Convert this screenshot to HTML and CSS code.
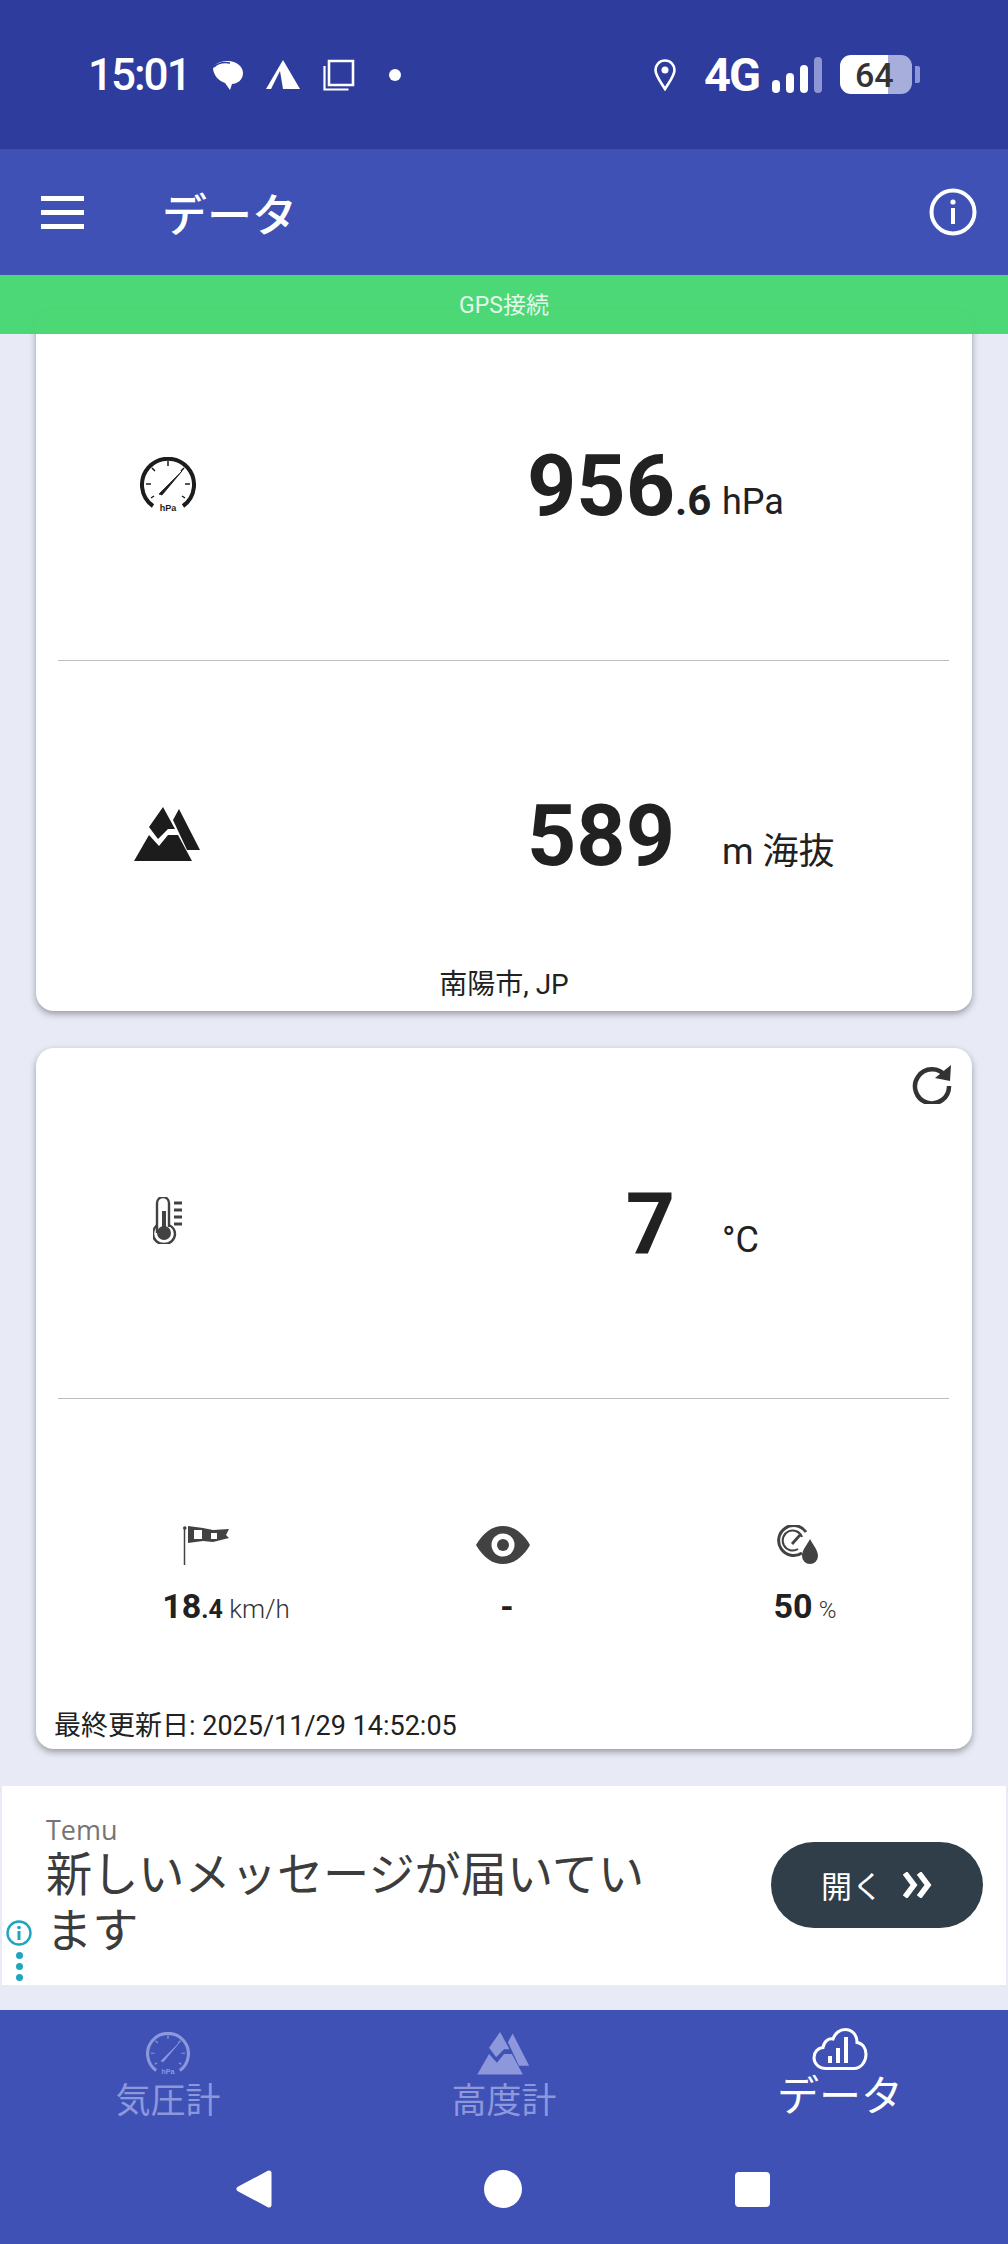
FILE: index.html
```html
<!DOCTYPE html>
<html lang="ja">
<head>
    <meta charset="UTF-8">
    <meta name="viewport" content="width=device-width, initial-scale=1.0">
    <title>データ</title>
    <link rel="stylesheet" href="styles.css">
</head>
<body>
    <svg class="defs" width="0" height="0">
        <symbol id="dial" viewBox="0 0 56 56">
            <path d="M13 49 A26 26 0 1 1 43 49" fill="none" stroke="currentColor" stroke-width="4"/>
            <path d="M28 4v5M6 27h5M50 27h-5M12 11l3 3M44 11l-3 3M11 41l3-2M45 41l-3-2" stroke="currentColor" stroke-width="1.5"/>
            <path d="M19 37 L42 14 L22 38Z" fill="currentColor" stroke="currentColor" stroke-width=".8"/>
        </symbol>
        <symbol id="mountain" viewBox="0 0 68 56">
            <path d="M29 0 L15 20 L24 32 L34 22 L41 22Z M45 2 L66 43 L53 43 L39 13Z M0 54 L15 28 L25 39 L34 28 L44 28 L58 54Z" fill="currentColor"/>
        </symbol>
    </svg>

    <div class="status-bar">
        <div class="status-left">
            <span class="clock">15:01</span>
            <svg class="st-bubble" viewBox="0 0 31 30"><path d="M1 9C3 3 9 1 16 1c8 0 15 5 15 12s-6 11-11 11l-2 6-5-7C7 21 2 16 1 9z" fill="#fff"/><path d="M2 7C6 3 12 2 18 3" stroke="#2d3c9d" stroke-width="1.5" fill="none"/></svg>
            <svg class="st-tri" viewBox="0 0 34 29"><path d="M17 0 L34 29 H17 L14 11 L5 29 H0Z" fill="#fff"/></svg>
            <svg class="st-copy" viewBox="0 0 32 32"><path d="M6 2h24v24H6z" fill="none" stroke="#fff" stroke-width="2.6"/><path d="M1.500 7v23.500h24" fill="none" stroke="#fff" stroke-width="2.2"/></svg>
            <span class="st-dot"></span>
        </div>
        <div class="status-right">
            <svg class="st-pin" viewBox="0 0 22 32"><path d="M11 1.500C5.500 1.500 1.500 6 1.500 11c0 6 6 13 9.500 19 3.500-6 9.500-13 9.500-19 0-5-4-9.500-9.500-9.500z" fill="none" stroke="#fff" stroke-width="2.6"/><circle cx="11" cy="11" r="3.500" fill="#fff"/></svg>
            <span class="net">4G</span>
            <div class="signal">
                <span class="bar b1"></span>
                <span class="bar b2"></span>
                <span class="bar b3"></span>
                <span class="bar b4"></span>
            </div>
            <div class="battery">
                <div class="battery-body"><span>64</span></div>
                <span class="battery-nub"></span>
            </div>
        </div>
    </div>

    <header class="toolbar">
        <div class="hamburger"><span></span><span></span><span></span></div>
        <h1>データ</h1>
        <svg class="info" viewBox="0 0 48 48">
            <circle cx="24" cy="24" r="21.500" fill="none" stroke="#fff" stroke-width="4"/>
            <rect x="22" y="20" width="4" height="16" fill="#fff"/>
            <circle cx="24" cy="14" r="2.600" fill="#fff"/>
        </svg>
    </header>

    <div class="gps-banner">GPS接続</div>

    <main class="content">
        <section class="card card-first">
            <div class="row">
                <svg class="row-icon gauge-icon" viewBox="0 0 56 56">
                    <use href="#dial"/>
                    <text x="28" y="54" text-anchor="middle" class="gauge-text">hPa</text>
                </svg>
                <div class="value"><b>956</b><span class="dec">.6</span></div>
                <div class="unit">hPa</div>
            </div>
            <div class="row row-line">
                <svg class="row-icon mountain-icon"><use href="#mountain"/></svg>
                <div class="value"><b>589</b><span class="dec"></span></div>
                <div class="unit">m 海抜</div>
            </div>
            <div class="place">南陽市, JP</div>
        </section>

        <section class="card">
            <svg class="refresh" viewBox="0 0 40 40">
                <path d="M33.500 12A17 17 0 1 0 37 22" fill="none" stroke="#333" stroke-width="4.500"/>
                <path d="M39 1 L38 17 L23 14Z" fill="#333"/>
            </svg>
            <div class="row">
                <svg class="row-icon thermo-icon" viewBox="0 0 30 47">
                    <path d="M4 36V6a6 6 0 0 1 12 0v24" fill="none" stroke="#424242" stroke-width="2.400"/>
                    <path d="M16 28c4 2 6 5 6 9a11 10 0 0 1-22 0c0-4 2-7 4-9" fill="none" stroke="#424242" stroke-width="2.400"/>
                    <circle cx="11" cy="36" r="7" fill="#424242"/>
                    <rect x="9" y="14" width="4" height="18" fill="#424242"/>
                    <path d="M21 6h8M21 13h8M21 20h8M21 27h8" stroke="#424242" stroke-width="3"/>
                </svg>
                <div class="value"><b>7</b><span class="dec"></span></div>
                <div class="unit">°C</div>
            </div>
            <div class="row-three row-line">
                <div class="stat stat-wind">
                    <svg class="stat-icon wind-icon" viewBox="0 0 48 40">
                        <path d="M1.500 3v37" stroke="#424242" stroke-width="1.500"/>
                        <circle cx="1.800" cy="3" r="1.800" fill="#424242"/>
                        <path d="M5 1 L20 3 L30 5 L46 4 L43 10 L46 13 L30 17 L20 16 L5 18Z" fill="#424242"/>
                        <path d="M11 5h8v9h-8zM28 8h6v6h-6z" fill="#fff"/>
                    </svg>
                    <div class="stat-text"><b>18</b><b class="small">.4</b> <span>km/h</span></div>
                </div>
                <div class="stat stat-eye">
                    <svg class="stat-icon eye-icon" viewBox="0 0 54 38">
                        <path d="M0 19C7 7 16 0 27 0s20 7 27 19c-7 12-16 19-27 19S7 31 0 19z" fill="#424242"/>
                        <circle cx="27" cy="19" r="11.500" fill="#fff"/>
                        <circle cx="27" cy="19" r="6" fill="#424242"/>
                    </svg>
                    <div class="stat-text"><b>-</b></div>
                </div>
                <div class="stat stat-hum">
                    <svg class="stat-icon hum-icon" viewBox="0 0 41 40">
                        <path d="M25 28A15 15 0 1 1 29 7" fill="none" stroke="#424242" stroke-width="3"/>
                        <path d="M21 24A10 10 0 1 1 25 12" fill="none" stroke="#424242" stroke-width="2"/>
                        <path d="M15 19 L23 10" stroke="#424242" stroke-width="2.800"/>
                        <path d="M33 14c3 6 8 11 8 17a8 8 0 0 1-16 0c0-6 5-11 8-17z" fill="#424242"/>
                    </svg>
                    <div class="stat-text"><b>50</b> <span class="pct">%</span></div>
                </div>
            </div>
            <div class="updated">最終更新日: 2025/11/29 14:52:05</div>
        </section>

        <aside class="ad">
            <div class="ad-text">
                <div class="ad-brand">Temu</div>
                <div class="ad-title">新しいメッセージが届いています</div>
            </div>
            <div class="ad-button">
                <span>開く</span>
                <svg class="chevrons" viewBox="0 0 30 26"><path d="M2 1l9 12-9 12M16 1l9 12-9 12" fill="none" stroke="#fff" stroke-width="5.500"/></svg>
            </div>
            <div class="ad-choices">
                <svg class="ad-info" viewBox="0 0 26 26"><circle cx="13" cy="13" r="11.500" fill="none" stroke="#1ea5c0" stroke-width="2.400"/><rect x="11.500" y="11" width="3" height="9" fill="#1ea5c0"/><circle cx="13" cy="7.500" r="1.800" fill="#1ea5c0"/></svg>
                <span class="ad-dot"></span><span class="ad-dot"></span><span class="ad-dot"></span>
            </div>
        </aside>
    </main>

    <footer class="bottom">
        <nav class="tabs">
            <div class="tab">
                <svg class="tab-icon" viewBox="0 0 56 56">
                    <use href="#dial"/>
                    <text x="28" y="54" text-anchor="middle" class="gauge-text">hPa</text>
                </svg>
                <span>気圧計</span>
            </div>
            <div class="tab">
                <svg class="tab-icon"><use href="#mountain"/></svg>
                <span>高度計</span>
            </div>
            <div class="tab active">
                <svg class="tab-icon" viewBox="0 0 56 42">
                    <path d="M14 40.500C6 40.500 2 35 2 29.500 2 24 6 20 11 19.500 12 13 17 10 21 11 23 5 28 1.500 33 1.500c7 0 12 5 12 13 6 1 9 6 9 12 0 7-5 14-12 14z" fill="none" stroke="#fff" stroke-width="3"/>
                    <path d="M16 28h4v7h-4zM24 20h4v15h-4zM32 9h4v26h-4z" fill="#fff"/>
                </svg>
                <span>データ</span>
            </div>
        </nav>
        <div class="sys-nav">
            <svg class="sys-back" viewBox="0 0 36 38"><path d="M33 3 L3 19 L33 35Z" fill="#fff" stroke="#fff" stroke-width="5" stroke-linejoin="round"/></svg>
            <span class="sys-home"></span>
            <span class="sys-recent"></span>
        </div>
    </footer>
</body>
</html>
```

FILE: styles.css
```css
* {
    margin: 0;
    padding: 0;
    box-sizing: border-box;
}

body {
    font-family: Roboto, 'Noto Sans CJK JP', sans-serif;
    background: #e8eaf6;
    color: #212121;
    width: 1008px;
    height: 2244px;
    display: flex;
    flex-direction: column;
    overflow: hidden;
}

.defs {
    position: absolute;
}

.gauge-text {
    font-family: 'Liberation Sans', sans-serif;
    font-size: 9px;
    font-weight: 700;
    fill: currentColor;
}

/* status bar */
.status-bar {
    height: 149px;
    background: #2d3c9d;
    color: white;
    display: flex;
    justify-content: space-between;
    align-items: center;
    padding: 0 88px 0 88px;
    flex-shrink: 0;
}

.status-left,
.status-right {
    display: flex;
    align-items: center;
}

.clock {
    font-family: Roboto, sans-serif;
    font-size: 44px;
    font-weight: 500;
    letter-spacing: -2px;
    width: 124px;
}

.st-bubble {
    width: 31px;
    height: 30px;
    margin-right: 23px;
}

.st-tri {
    width: 34px;
    height: 29px;
    margin-right: 23px;
}

.st-copy {
    width: 32px;
    height: 32px;
    margin-right: 34px;
}

.st-dot {
    width: 12px;
    height: 12px;
    border-radius: 50%;
    background: white;
}

.st-pin {
    width: 22px;
    height: 32px;
    margin-right: 28px;
}

.net {
    font-family: Roboto, sans-serif;
    font-size: 47px;
    font-weight: 700;
    letter-spacing: -2px;
    width: 68px;
    line-height: 1;
}

.signal {
    display: flex;
    align-items: flex-end;
    gap: 6px;
    height: 36px;
    margin-right: 18px;
}

.bar {
    width: 8px;
    background: white;
    border-radius: 4px;
}

.b1 { height: 13px; }
.b2 { height: 20px; }
.b3 { height: 28px; }
.b4 { height: 36px; background: #8e97d6; }

.battery {
    display: flex;
    align-items: center;
    gap: 3px;
}

.battery-body {
    width: 72px;
    height: 39px;
    border-radius: 11px;
    background: linear-gradient(90deg, white 0, white 48px, #a8aedb 48px);
    color: #333;
    font-family: Roboto, sans-serif;
    font-size: 34px;
    font-weight: 500;
    line-height: 40px;
    padding-left: 15px;
}

.battery-nub {
    width: 5px;
    height: 17px;
    background: #8e97d6;
    border-radius: 0 2px 2px 0;
}

/* toolbar */
.toolbar {
    height: 126px;
    background: #3f51b5;
    color: white;
    display: flex;
    align-items: center;
    padding: 0 31px 0 41px;
    flex-shrink: 0;
}

.hamburger {
    width: 43px;
    display: flex;
    flex-direction: column;
    gap: 9px;
}

.hamburger span {
    height: 5px;
    background: white;
}

.toolbar h1 {
    font-size: 45px;
    font-weight: 500;
    margin-left: 78px;
    flex: 1;
}

.info {
    width: 48px;
    height: 48px;
}

.gps-banner {
    height: 59px;
    background: rgba(70, 214, 112, 0.96);
    color: #e4f8e9;
    font-size: 23px;
    text-align: center;
    line-height: 62px;
    position: relative;
    z-index: 2;
    flex-shrink: 0;
}

/* cards */
.content {
    flex: 1;
    display: flex;
    flex-direction: column;
    gap: 37px;
}

.card {
    position: relative;
    margin: 0 36px;
    height: 701px;
    background: white;
    border-radius: 18px;
    box-shadow: 0 3px 7px rgba(0, 0, 0, 0.35);
}

.card-first {
    margin-top: -24px;
}

.row {
    height: 350px;
    display: grid;
    grid-template-columns: 264px 422px 1fr;
    align-items: center;
}

.row-line {
    position: relative;
}

.row-line::before {
    content: "";
    position: absolute;
    top: 0;
    left: 22px;
    right: 23px;
    height: 1px;
    background: #bdbdbd;
}

.row-icon {
    justify-self: center;
}

.gauge-icon {
    width: 56px;
    height: 56px;
    color: #1c1c1c;
}

.mountain-icon {
    width: 68px;
    height: 56px;
    color: #1c1c1c;
}

.thermo-icon {
    width: 30px;
    height: 47px;
    margin-top: -5px;
}

.value {
    text-align: right;
    white-space: nowrap;
    line-height: 1;
    margin-top: 2px;
}

.value b {
    font-size: 86px;
    font-weight: 700;
}

.dec {
    display: inline-block;
    min-width: 47px;
    font-size: 42px;
    font-weight: 700;
    text-align: left;
}

.unit {
    font-size: 36px;
    line-height: 42px;
    margin-top: 34px;
    white-space: nowrap;
}

.place {
    position: absolute;
    left: 0;
    right: 0;
    bottom: 9px;
    text-align: center;
    font-size: 28px;
}

.refresh {
    position: absolute;
    top: 16px;
    right: 20px;
    width: 40px;
    height: 40px;
}

.row-three {
    height: 351px;
}

.stat {
    position: absolute;
    top: 127px;
    display: flex;
    flex-direction: column;
    align-items: center;
    width: 240px;
}

.stat-wind { left: 70px; }
.stat-eye { left: 351px; }
.stat-hum { left: 649px; }

.stat-icon {
    height: 40px;
}

.wind-icon { width: 48px; margin-right: 38px; }
.eye-icon { width: 54px; margin-right: 8px; }
.hum-icon { width: 41px; margin-right: 16px; }

.stat-text {
    margin-top: 21px;
    font-size: 26px;
    line-height: 40px;
    white-space: nowrap;
}

.stat-text b {
    font-size: 34px;
    font-weight: 700;
}

.stat-text .small {
    font-size: 25px;
}

.stat-text span {
    font-weight: 300;
    color: #333;
}

.stat-text .pct {
    font-size: 24px;
}

.updated {
    position: absolute;
    left: 18px;
    bottom: 6px;
    font-size: 27px;
}

/* ad */
.ad {
    position: relative;
    margin: 0 2px;
    height: 199px;
    background: white;
    display: flex;
    align-items: center;
    justify-content: space-between;
    padding: 2px 23px 0 44px;
}

.ad-brand {
    font-family: 'Open Sans', 'Noto Sans CJK JP', sans-serif;
    font-size: 27px;
    color: #757575;
    line-height: 34px;
    margin-top: -2px;
}

.ad-title {
    font-size: 46.2px;
    line-height: 56px;
    color: #3c3c3c;
    width: 610px;
}

.ad-button {
    width: 212px;
    height: 86px;
    margin-top: -4px;
    border-radius: 43px;
    background: #2f3e48;
    color: white;
    font-size: 31px;
    display: flex;
    align-items: center;
    justify-content: center;
    gap: 20px;
}

.chevrons {
    width: 30px;
    height: 26px;
}

.ad-choices {
    position: absolute;
    left: 4px;
    bottom: 4px;
    display: flex;
    flex-direction: column;
    align-items: center;
    gap: 4px;
}

.ad-info {
    width: 26px;
    height: 26px;
    margin-bottom: 2px;
}

.ad-dot {
    width: 7px;
    height: 7px;
    border-radius: 50%;
    background: #1ea5c0;
}

/* bottom nav */
.bottom {
    height: 234px;
    background: #3f51b5;
    flex-shrink: 0;
}

.tabs {
    display: grid;
    grid-template-columns: repeat(3, 336px);
    height: 118px;
}

.tab {
    display: flex;
    flex-direction: column;
    align-items: center;
    padding-top: 22px;
    color: #8c98db;
    font-size: 35px;
    line-height: 42px;
}

.tab-icon {
    width: 56px;
    height: 44px;
    margin-bottom: 5px;
}

.tab.active {
    color: white;
    font-size: 42px;
    padding-top: 17px;
}

.sys-nav {
    display: grid;
    grid-template-columns: repeat(3, 249px);
    justify-content: center;
    justify-items: center;
    align-items: center;
    height: 116px;
    padding-top: 6px;
    padding-right: 2px;
}

.sys-back {
    width: 36px;
    height: 38px;
}

.sys-home {
    width: 38px;
    height: 38px;
    border-radius: 50%;
    background: white;
}

.sys-recent {
    width: 35px;
    height: 35px;
    border-radius: 4px;
    background: white;
}
```
